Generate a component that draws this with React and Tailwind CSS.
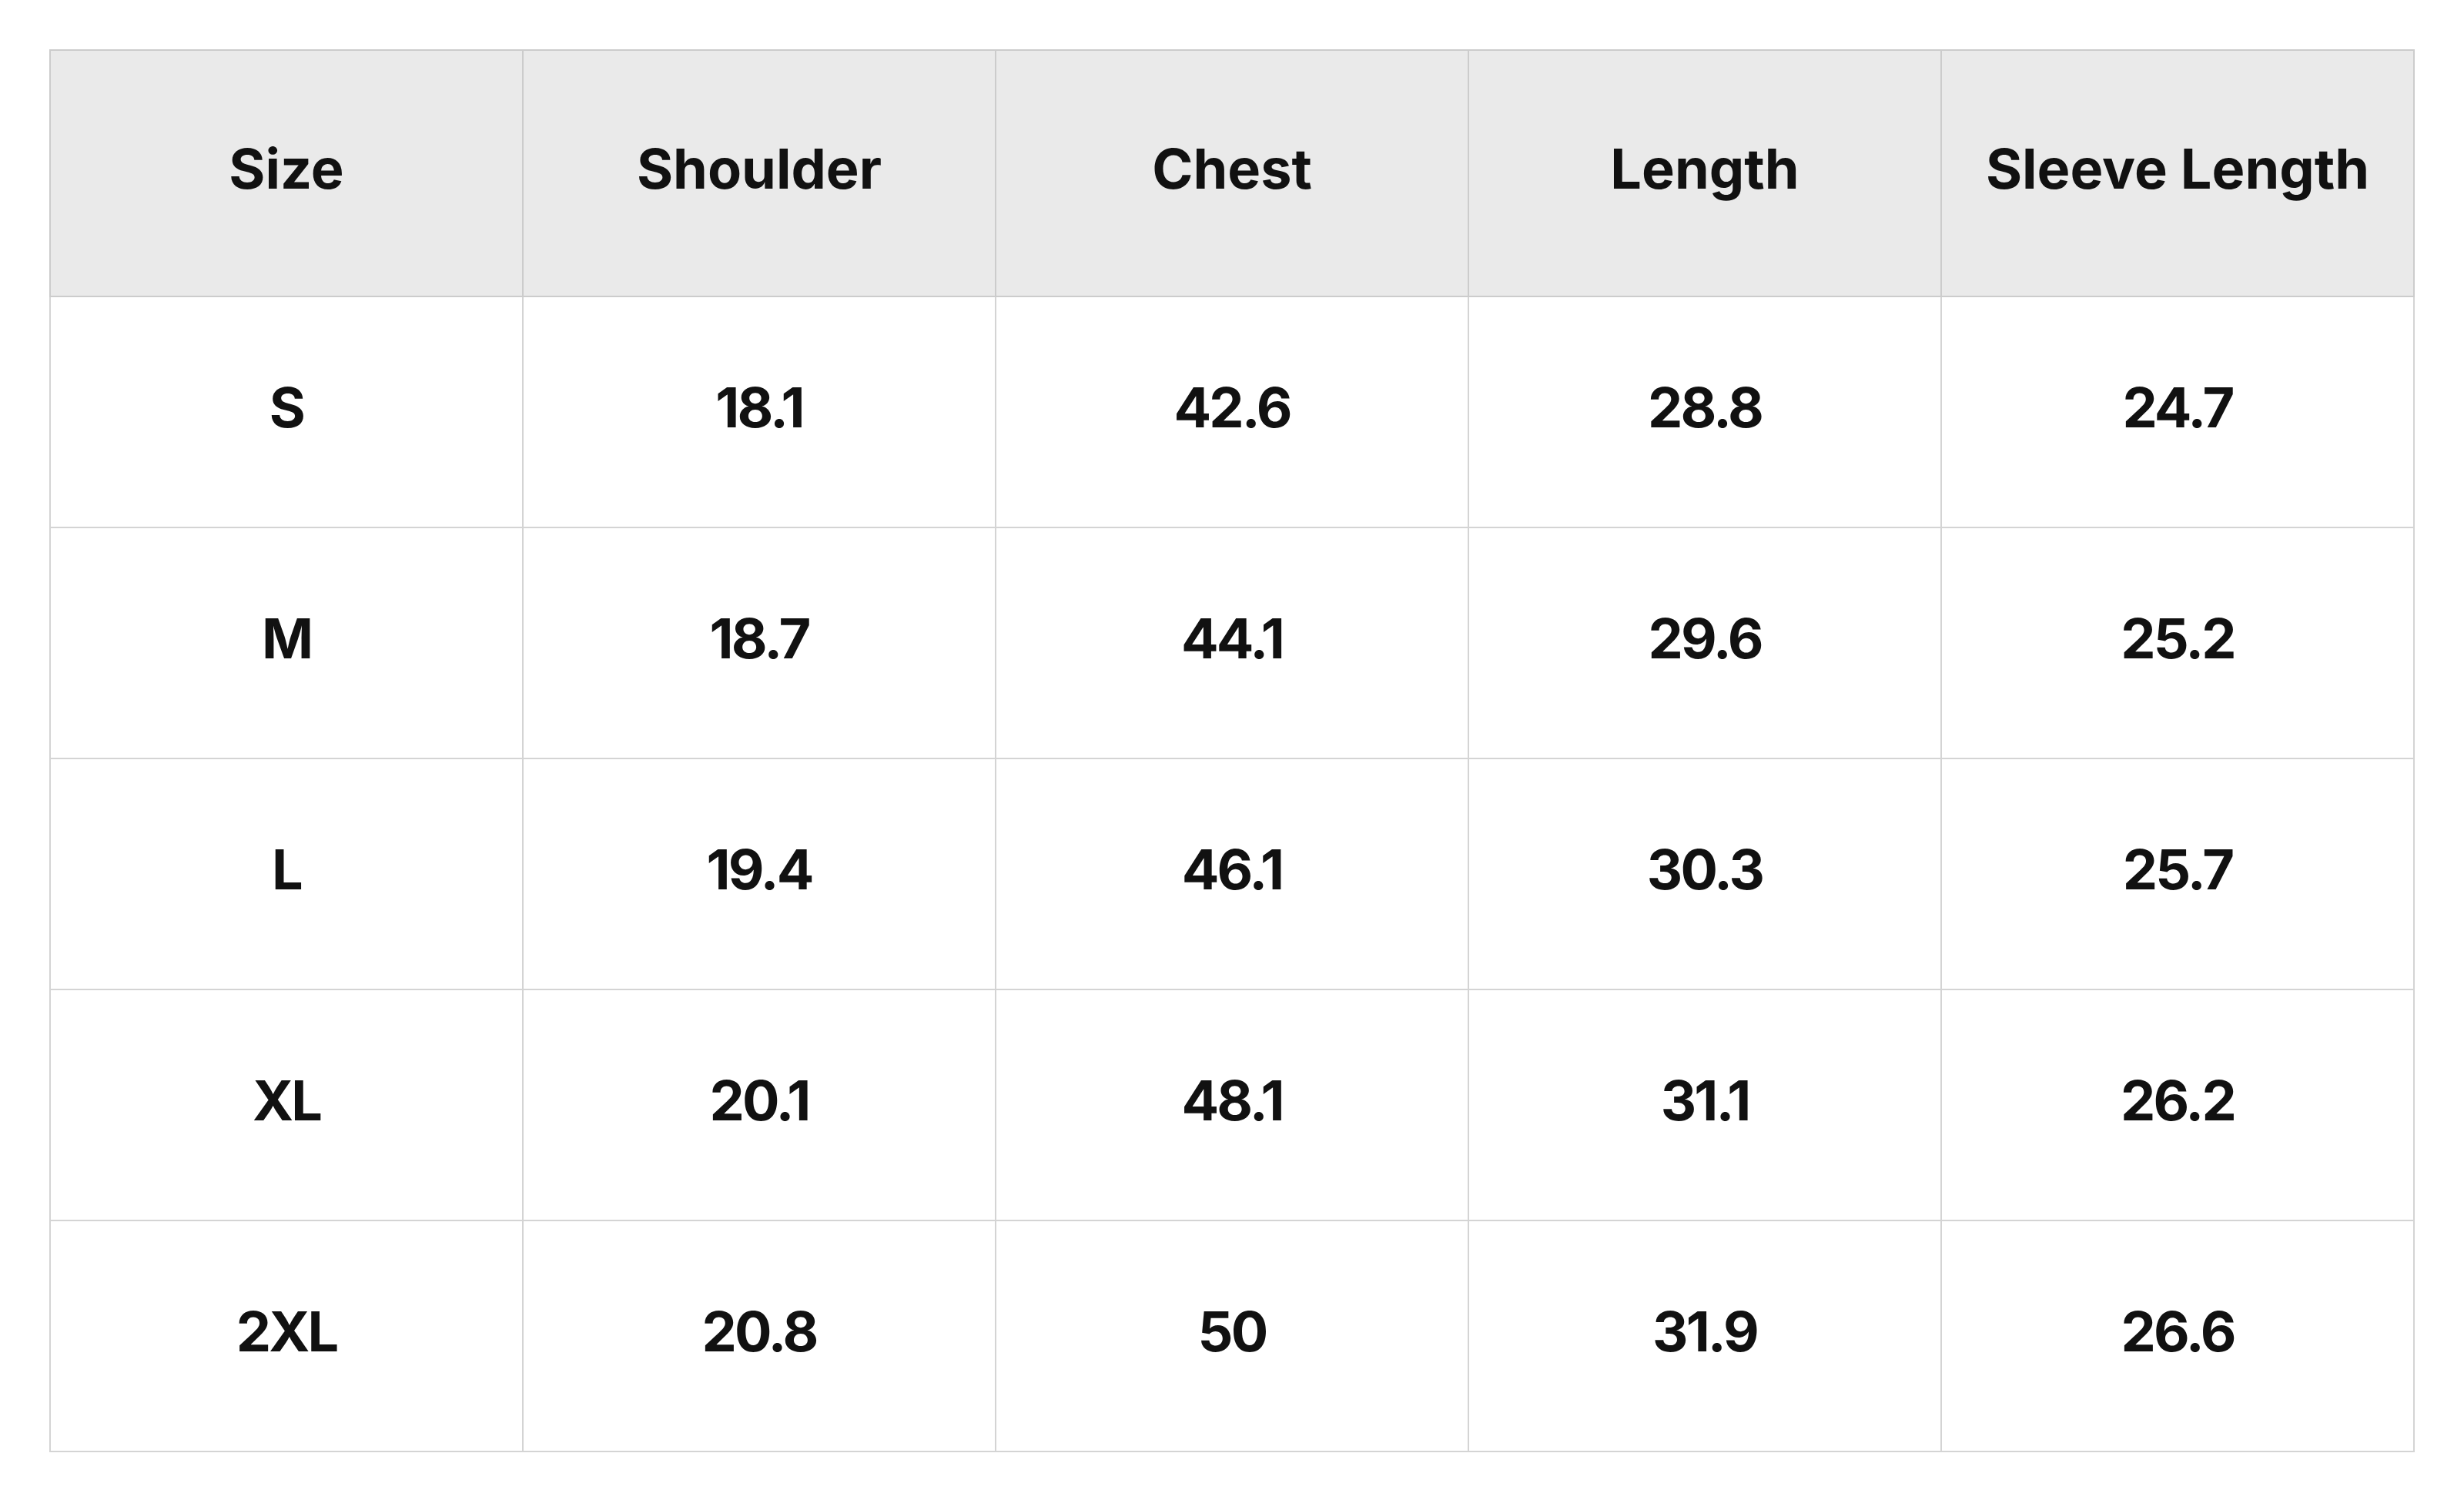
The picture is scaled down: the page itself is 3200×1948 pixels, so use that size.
import React from 'react';

const headers = ['Size', 'Shoulder', 'Chest', 'Length', 'Sleeve Length'];

const rows = [
  ['S', '18.1', '42.6', '28.8', '24.7'],
  ['M', '18.7', '44.1', '29.6', '25.2'],
  ['L', '19.4', '46.1', '30.3', '25.7'],
  ['XL', '20.1', '48.1', '31.1', '26.2'],
  ['2XL', '20.8', '50', '31.9', '26.6'],
];

const App = () => {
  return (
    <div className="min-h-screen bg-white p-16" style={{ fontFamily: 'Inter, "Noto Sans", sans-serif' }}>
      <table className="w-[3072px] table-fixed border-collapse border-2 border-[#cccccc] text-center text-[#111111]">
        <thead>
          <tr className="h-[320px] bg-[#eaeaea]">
            {headers.map((h) => (
              <th key={h} className="border-2 border-[#cccccc] pb-[12px] text-[72px] font-bold">
                {h}
              </th>
            ))}
          </tr>
        </thead>
        <tbody>
          {rows.map((row) => (
            <tr key={row[0]} className="h-[300px]">
              {row.map((cell, i) => (
                <td key={i} className="border-2 border-[#d4d4d4] pb-[12px] text-[72px] font-bold tracking-[-0.04em]">
                  {cell}
                </td>
              ))}
            </tr>
          ))}
        </tbody>
      </table>
    </div>
  );
};

export default App;
